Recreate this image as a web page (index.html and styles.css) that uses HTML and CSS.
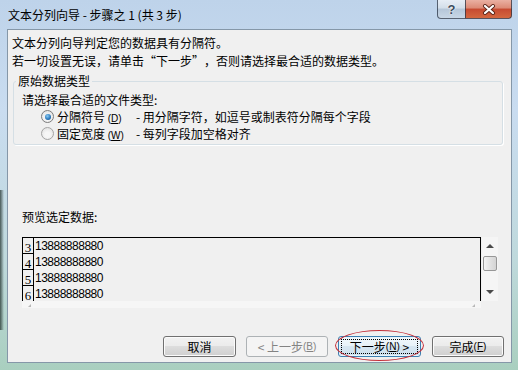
FILE: index.html
```html
<!DOCTYPE html>
<html lang="zh-CN">
<head>
  <meta charset="UTF-8">
  <title>文本分列向导 - 步骤之 1 (共 3 步)</title>
  <link rel="stylesheet" href="styles.css">
</head>
<body>
  <div class="window">
    <div class="titlebar">
      <span class="title">文本分列向导 - 步骤之 1 (共 3 步)</span>
      <div class="caption-buttons">
        <span class="cap-btn help">?</span>
        <span class="cap-btn close">
          <svg width="14" height="11" viewBox="0 0 14 11">
            <path d="M3 2 L11 9 M11 2 L3 9" stroke="#5a2418" stroke-width="4" stroke-linecap="round"/>
            <path d="M3 2 L11 9 M11 2 L3 9" stroke="#ffffff" stroke-width="2.2" stroke-linecap="round"/>
          </svg>
        </span>
      </div>
    </div>

    <div class="client">
      <div class="intro">
        <p>文本分列向导判定您的数据具有分隔符。</p>
        <p>若一切设置无误，请单击<span class="q open">“</span>下一步<span class="q close-q">”</span>，否则请选择最合适的数据类型。</p>
      </div>

      <fieldset class="group">
        <legend>原始数据类型</legend>
        <div class="hint">请选择最合适的文件类型:</div>
        <div class="option">
          <span class="radio checked"></span>
          <span class="opt-name">分隔符号 <span class="acc">(<u>D</u>)</span></span>
          <span class="opt-desc">- 用分隔字符，如逗号或制表符分隔每个字段</span>
        </div>
        <div class="option">
          <span class="radio"></span>
          <span class="opt-name">固定宽度 <span class="acc">(<u>W</u>)</span></span>
          <span class="opt-desc">- 每列字段加空格对齐</span>
        </div>
      </fieldset>

      <div class="preview-label">预览选定数据:</div>
      <div class="preview">
        <div class="grid">
          <div class="row"><span class="num">3</span><span class="cell">13888888880</span></div>
          <div class="row"><span class="num">4</span><span class="cell">13888888880</span></div>
          <div class="row"><span class="num">5</span><span class="cell">13888888880</span></div>
          <div class="row"><span class="num">6</span><span class="cell">13888888880</span></div>
        </div>
        <div class="vscroll">
          <span class="arrow-up"></span>
          <span class="thumb"></span>
          <span class="arrow-down"></span>
        </div>
      </div>
      <div class="hscroll">
        <span class="grip"></span>
        <span class="grip"></span>
      </div>

      <div class="buttons">
        <button class="btn cancel">取消</button>
        <button class="btn back disabled">&lt; 上一步<span class="acc">(<u>B</u>)</span></button>
        <button class="btn next default">
          <span class="focus">下一步<span class="acc">(<u>N</u>)</span>&nbsp;&gt;</span>
          <span class="mark"></span>
        </button>
        <button class="btn finish">完成<span class="acc">(<u>F</u>)</span></button>
      </div>
    </div>
  </div>
</body>
</html>
```

FILE: styles.css
```css
body {
  margin: 0;
  font-family: "Noto Sans CJK SC", "Liberation Sans", sans-serif;
  font-size: 12px;
  color: #000;
  background: #c3d7ec;
}

.window {
  width: 518px;
  height: 370px;
  display: flex;
  flex-direction: column;
  background:
    linear-gradient(to right, rgba(30, 45, 40, 0.75) 0, rgba(30, 45, 40, 0) 4px) 0 190px / 6px 140px no-repeat,
    linear-gradient(to bottom, #bed3ea 0%, #c9dcf0 30%, #bfd9dc 70%, #a9cfbf 100%);
}

/* title bar */
.titlebar {
  height: 29px;
  flex-shrink: 0;
  display: flex;
  align-items: flex-start;
  padding: 0 6px 0 8px;
}

.title {
  flex: 1;
  margin-top: 7px;
  line-height: 16px;
}

.caption-buttons {
  display: flex;
}

.cap-btn {
  height: 19px;
  box-sizing: border-box;
  border: 1px solid rgba(40, 52, 70, 0.75);
  border-top: none;
  display: flex;
  align-items: center;
  justify-content: center;
}

.help {
  width: 28px;
  border-right: none;
  border-radius: 0 0 0 4px;
  background: linear-gradient(#e6edf5, #d3dee9 45%, #b5c6d8 50%, #c8d7e6);
  font: bold 13px "Liberation Sans", sans-serif;
  color: #3b4b5d;
  text-shadow: 0 0 1px #fff, 0 0 2px #fff;
}

.close {
  width: 47px;
  border-radius: 0 0 4px 0;
  background: linear-gradient(#eab0a2, #dc8a76 45%, #c64a31 50%, #d4673f);
}

/* client area */
.client {
  flex: 1;
  margin: 0 6px 7px 7px;
  background: #f0f0f0;
  border: 1px solid #8597a8;
  display: flex;
  flex-direction: column;
}

.intro {
  padding: 4px 0 0 4px;
}

.intro p {
  margin: 0;
  line-height: 18px;
}

/* full-width quote marks */
.q {
  display: inline-block;
  width: 12px;
}

.q.open {
  text-align: right;
}

.q.close-q {
  text-align: left;
}

.group {
  margin: 3px 8px 0 5px;
  padding: 2px 8px 2px 8px;
  border: 1px solid #d5dfe5;
  border-radius: 3px;
  box-shadow: 1px 1px 0 #fff;
}

.group legend {
  margin-left: -6px;
  padding: 0 2px;
  line-height: 16px;
}

.hint {
  line-height: 17px;
}

.option {
  display: flex;
  align-items: center;
  height: 17px;
  padding-left: 19px;
}

.radio {
  width: 13px;
  height: 13px;
  box-sizing: border-box;
  margin-right: 3px;
  border: 1px solid #a4a4a4;
  border-radius: 50%;
  background: radial-gradient(circle at 50% 60%, #f6f6f6 30%, #dcdcdc 100%);
  display: flex;
  align-items: center;
  justify-content: center;
}

.radio.checked {
  border-color: #7c7c7c;
}

.radio.checked::after {
  content: "";
  width: 6px;
  height: 6px;
  border-radius: 50%;
  background: radial-gradient(circle at 40% 35%, #8ccbf2 0%, #2d7cc0 55%, #0e3f74 100%);
}

.opt-name {
  width: 79px;
}

.acc {
  font-family: "Liberation Sans", sans-serif;
  font-size: 10px;
}

/* preview */
.preview-label {
  margin: 64px 0 0 14px;
  line-height: 16px;
}

.preview {
  margin: 12px 0 0 14px;
  height: 64px;
  display: flex;
}

.grid {
  width: 459px;
  box-sizing: border-box;
  border: 1px solid #000;
  border-bottom: none;
  overflow: hidden;
}

.row {
  display: flex;
  height: 16px;
}

.num {
  width: 11px;
  flex-shrink: 0;
  box-sizing: border-box;
  border-right: 1px solid #000;
  border-bottom: 1px solid #000;
  font-family: "Liberation Serif", serif;
  font-size: 13px;
  line-height: 19px;
  text-align: center;
}

.cell {
  padding-left: 1px;
  font-family: "Liberation Sans", sans-serif;
  font-size: 12px;
  letter-spacing: -0.5px;
  line-height: 17px;
}

.vscroll {
  width: 16px;
  margin-left: 1px;
  background: #f5f5f5;
  display: flex;
  flex-direction: column;
  align-items: center;
}

.arrow-up,
.arrow-down {
  width: 0;
  height: 0;
  border-left: 4px solid transparent;
  border-right: 4px solid transparent;
}

.arrow-up {
  margin-top: 7px;
  border-bottom: 4px solid #4a4a4a;
}

.thumb {
  width: 14px;
  height: 15px;
  box-sizing: border-box;
  margin-top: 8px;
  border: 1px solid #979797;
  border-radius: 2px;
  background: linear-gradient(to right, #f3f3f3, #e2e2e2 50%, #d4d4d4);
}

.arrow-down {
  margin-top: 19px;
  border-top: 4px solid #4a4a4a;
}

.hscroll {
  width: 459px;
  height: 7px;
  margin-left: 14px;
  background: #f6f6f6;
  display: flex;
  justify-content: space-between;
  padding: 0 6px 0 6px;
  box-sizing: border-box;
}

.grip {
  width: 0;
  height: 0;
  margin-top: 3px;
  border-left: 3px solid transparent;
  border-bottom: 3px solid #b8b8b8;
}

/* buttons */
.buttons {
  margin-top: auto;
  display: flex;
  justify-content: flex-end;
  gap: 10px;
  padding: 0 7px 5px 0;
}

.btn {
  height: 21px;
  box-sizing: border-box;
  padding: 0;
  border: 1px solid #707070;
  border-radius: 3px;
  background: linear-gradient(#f2f2f2 0%, #ebebeb 50%, #dddddd 50%, #cfcfcf 100%);
  box-shadow: inset 0 0 0 1px #fbfbfb;
  font-family: "Noto Sans CJK SC", "Liberation Sans", sans-serif;
  font-size: 12px;
  color: #000;
  display: flex;
  align-items: center;
  justify-content: center;
}

.cancel { width: 73px; }
.back { width: 82px; }
.next { width: 83px; }
.finish { width: 72px; margin-left: 1px; }

.btn.disabled {
  border-color: #adb2b5;
  background: #f4f4f4;
  box-shadow: none;
  color: #838383;
}

.btn.default {
  position: relative;
  border-color: #3c7fb1;
  background: linear-gradient(#f1f8fc 0%, #e6f1f8 50%, #d6e6f1 50%, #cde0ee 100%);
  box-shadow: inset 0 0 0 1px #e8f4fb;
}

.focus {
  width: 77px;
  height: 15px;
  box-sizing: border-box;
  border: 1px dotted #000;
  display: flex;
  align-items: center;
  justify-content: center;
}

.mark {
  position: absolute;
  left: -4px;
  top: -7px;
  width: 89px;
  height: 31px;
  box-sizing: border-box;
  border: 1px solid #c4303a;
  border-radius: 50%;
  pointer-events: none;
}
```
